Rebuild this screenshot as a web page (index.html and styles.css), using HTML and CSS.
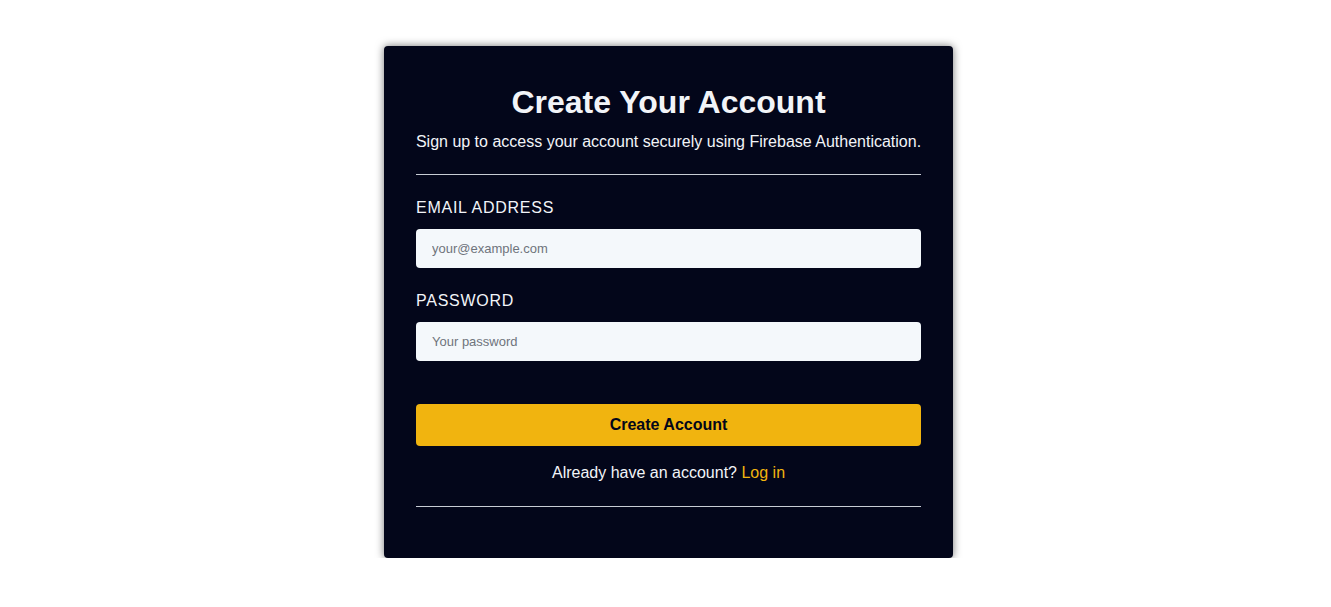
FILE: index.html
```html
<!DOCTYPE html>
<html>
<head>
<meta charset="utf-8">
<link rel="stylesheet" href="styles.css">
</head>
<body>
<div class="page">
  <div class="card">
    <h1 class="title">Create Your Account</h1>
    <p class="subtitle">Sign up to access your account securely using Firebase Authentication.</p>
    <hr class="rule">
    <form class="form">
      <label class="label" for="email">Email Address</label>
      <input class="input" id="email" type="email" placeholder="your@example.com">
      <label class="label" for="pw">Password</label>
      <input class="input" id="pw" type="password" placeholder="Your password">
      <button class="btn" type="button">Create Account</button>
    </form>
    <p class="alt">Already have an account? <a class="link" href="#">Log in</a></p>
    <hr class="rule rule-bottom">
  </div>
</div>
</body>
</html>
```

FILE: styles.css
```css
html, body {
  margin: 0;
  padding: 0;
  background: #ffffff;
  font-family: "Liberation Sans", Arial, sans-serif;
}
.page {
  display: flex;
  justify-content: center;
  padding: 46px 0 0 6px;
}
.card {
  width: 569px;
  box-sizing: border-box;
  padding: 32px 32px 51px;
  background: #03061a;
  border-radius: 4px;
  box-shadow: 0 0 8px rgba(0, 0, 0, 0.55);
  color: #f2f4f8;
}
.title {
  margin: 0;
  text-align: center;
  font-size: 32px;
  line-height: 48px;
  font-weight: 700;
}
.subtitle {
  margin: 5px -8px 0;
  text-align: center;
  font-size: 16px;
  line-height: 22px;
  white-space: nowrap;
}
.rule {
  margin: 21px 0 0;
  border: 0;
  height: 1px;
  background: #c8ccd4;
}
.form {
  display: flex;
  flex-direction: column;
}
.label {
  margin-top: 23px;
  font-size: 16px;
  line-height: 20px;
  text-transform: uppercase;
  letter-spacing: 0.75px;
}
.input {
  margin-top: 11px;
  height: 39px;
  box-sizing: border-box;
  border: none;
  border-radius: 4px;
  background: #f4f8fb;
  padding: 0 16px;
  font-family: "Liberation Sans", Arial, sans-serif;
  font-size: 13px;
  color: #222;
}
.input::placeholder {
  color: #6f747c;
}
.btn {
  margin-top: 43px;
  height: 42px;
  border: none;
  border-radius: 4px;
  background: #f1b40f;
  color: #03061a;
  font-family: "Liberation Sans", Arial, sans-serif;
  font-size: 16px;
  font-weight: 700;
}
.alt {
  margin: 17px 0 0;
  text-align: center;
  font-size: 16px;
  line-height: 20px;
}
.link {
  color: #f1b40f;
  text-decoration: none;
}
.rule-bottom {
  margin-top: 23px;
}
```
